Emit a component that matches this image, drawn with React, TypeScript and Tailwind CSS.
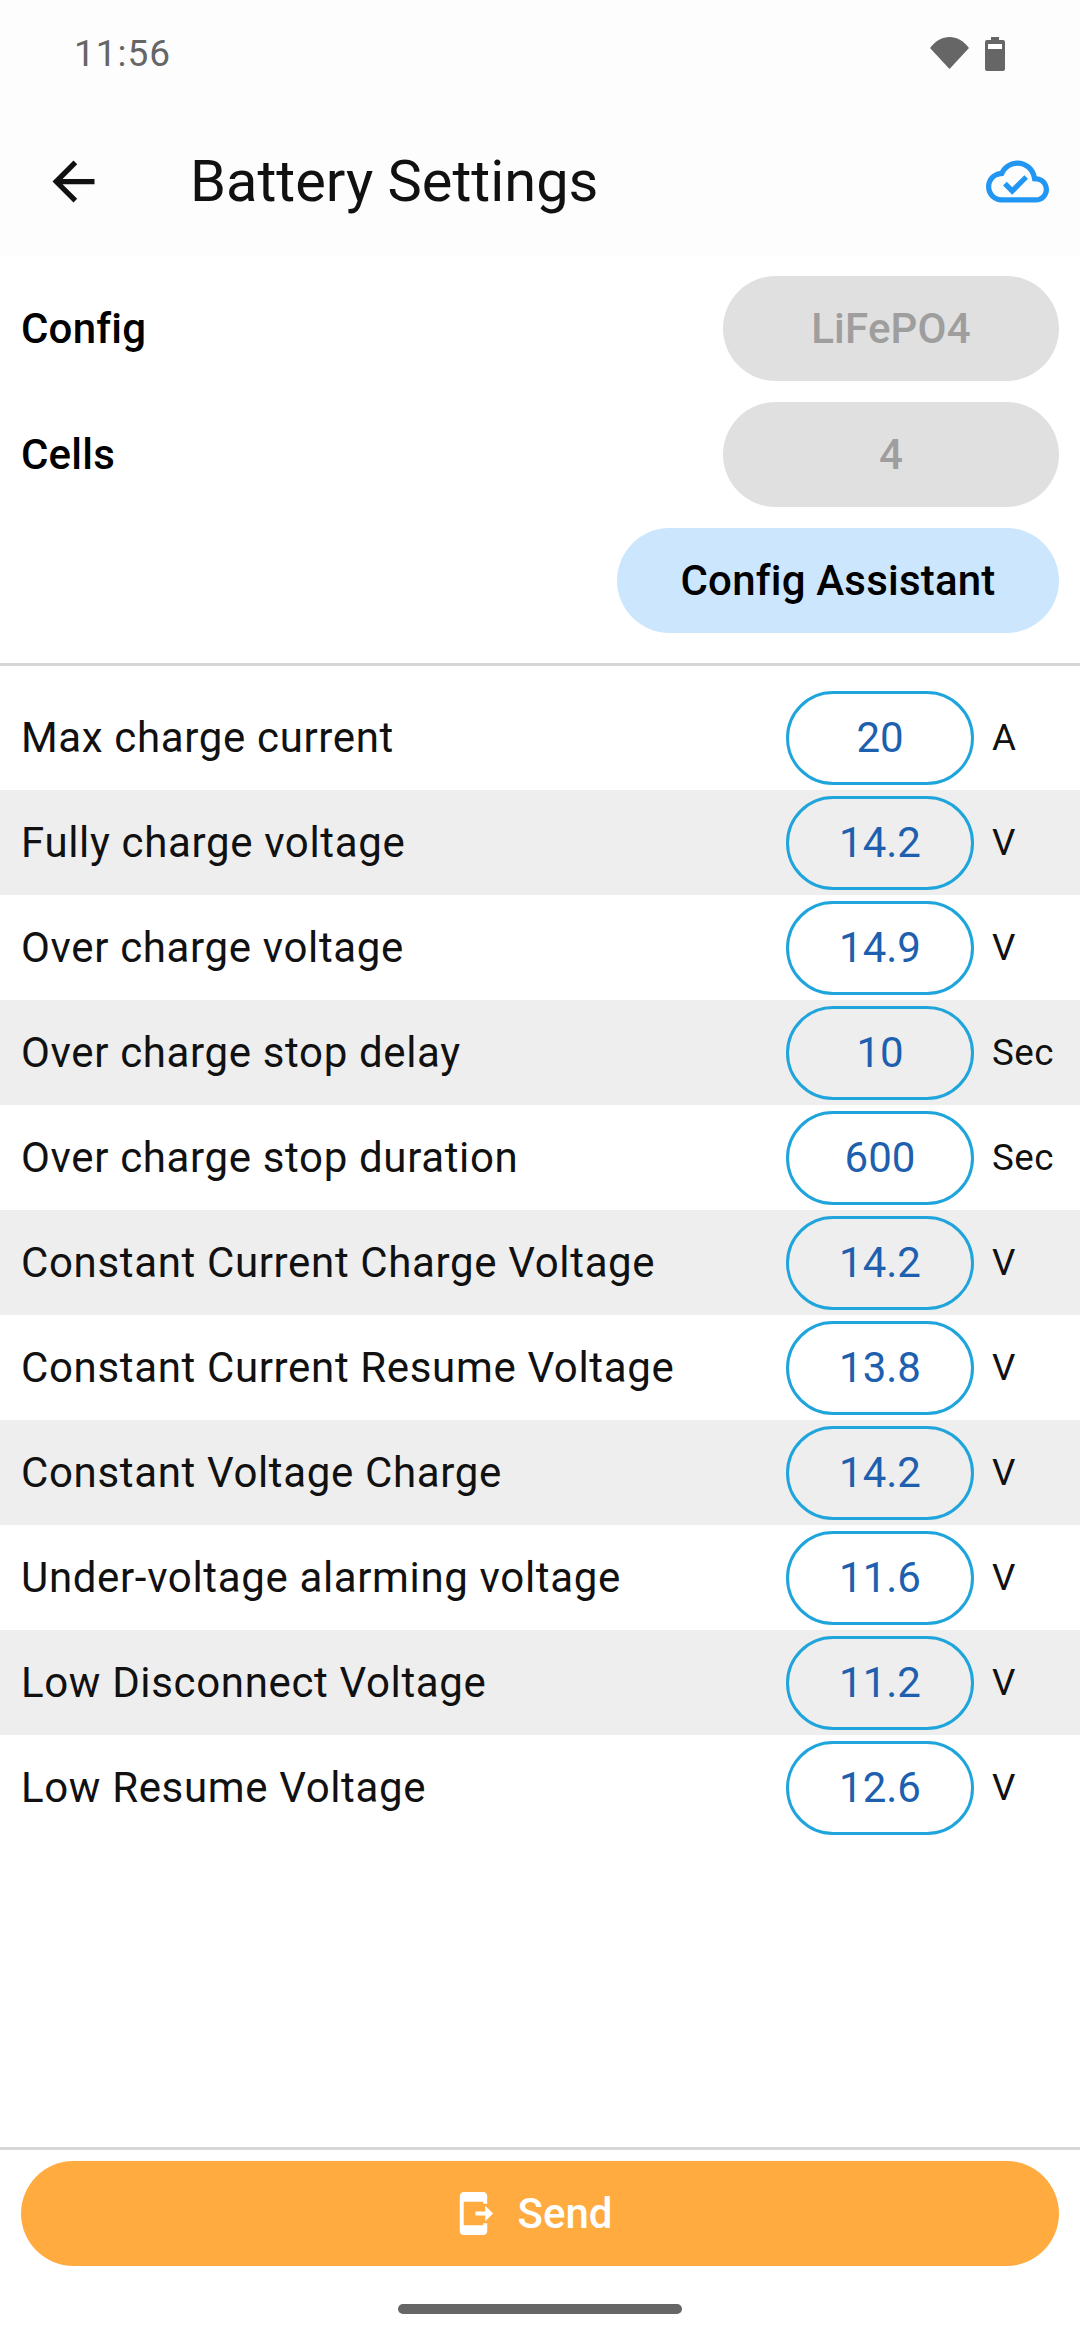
import React from "react";

const rows: [string, string, string][] = [
  ["Max charge current", "20", "A"],
  ["Fully charge voltage", "14.2", "V"],
  ["Over charge voltage", "14.9", "V"],
  ["Over charge stop delay", "10", "Sec"],
  ["Over charge stop duration", "600", "Sec"],
  ["Constant Current Charge Voltage", "14.2", "V"],
  ["Constant Current Resume Voltage", "13.8", "V"],
  ["Constant Voltage Charge", "14.2", "V"],
  ["Under-voltage alarming voltage", "11.6", "V"],
  ["Low Disconnect Voltage", "11.2", "V"],
  ["Low Resume Voltage", "12.6", "V"],
];

export default function App() {
  return (
    <div className="flex h-[2340px] w-[1080px] flex-col bg-white font-['Roboto',sans-serif] text-black">
      <div className="flex h-[108px] items-start justify-between bg-[#fdfdfd] pl-[74px] pr-[75px] pt-[33px]">
        <span className="text-[37px] leading-[42px] tracking-[1px] text-[#666666]">11:56</span>
        <div className="mt-[4px] flex items-start gap-[16px]">
          <svg width="39" height="32" viewBox="0 0 39 32">
            <path d="M0 11 C11 -3.6 28 -3.6 39 11 L19.5 32 Z" fill="#666666" />
          </svg>
          <svg width="20" height="34" viewBox="0 0 20 34">
            <path d="M6 0h8v3h4a2 2 0 0 1 2 2v27a2 2 0 0 1-2 2H2a2 2 0 0 1-2-2V5a2 2 0 0 1 2-2h4z" fill="#666666" />
            <rect x="3" y="7" width="14" height="5" fill="#ffffff" />
          </svg>
        </div>
      </div>
      <div className="flex h-[147px] items-center bg-[#fdfdfd]">
        <svg className="ml-[42px]" width="63" height="63" viewBox="0 0 24 24" fill="#111111">
          <path d="M20 11H7.83l5.59-5.59L12 4l-8 8 8 8 1.41-1.41L7.83 13H20v-2z" />
        </svg>
        <span className="mb-[2px] ml-[85px] text-[57.75px] leading-[66px] text-[#111111]">Battery Settings</span>
        <svg className="ml-auto mr-[31px]" width="63" height="63" viewBox="0 0 24 24" fill="#2196f3">
          <path d="M19.35 10.04C18.67 6.59 15.64 4 12 4 9.11 4 6.6 5.64 5.35 8.04 2.34 8.36 0 10.91 0 14c0 3.31 2.69 6 6 6h13c2.76 0 5-2.24 5-5 0-2.64-2.05-4.78-4.65-4.96zM19 18H6c-2.21 0-4-1.79-4-4 0-2.05 1.53-3.76 3.56-3.97l1.07-.11.5-.95C8.08 7.14 9.94 6 12 6c2.62 0 4.88 1.86 5.39 4.43l.3 1.5 1.53.11c1.56.1 2.78 1.41 2.78 2.96 0 1.65-1.35 3-3 3zm-9-3.82l-2.09-2.09L6.5 13.5 10 17l6.01-6.01-1.41-1.41z" />
        </svg>
      </div>

      <div className="flex flex-col gap-[21px] px-[21px] pt-[21px]">
        <div className="flex items-center justify-between">
          <span className="text-[42px] font-medium tracking-[0.2px]">Config</span>
          <div className="flex h-[105px] w-[336px] items-center justify-center rounded-[53px] bg-[#e0e0e0] text-[42px] font-medium tracking-[0.2px] text-[#9e9e9e]">LiFePO4</div>
        </div>
        <div className="flex items-center justify-between">
          <span className="text-[42px] font-medium tracking-[0.2px]">Cells</span>
          <div className="flex h-[105px] w-[336px] items-center justify-center rounded-[53px] bg-[#e0e0e0] text-[42px] font-medium tracking-[0.2px] text-[#9e9e9e]">4</div>
        </div>
        <div className="flex justify-end">
          <div className="flex h-[105px] w-[442px] items-center justify-center rounded-[53px] bg-[#cce6fd] text-[42px] font-medium tracking-[0.2px]">Config Assistant</div>
        </div>
      </div>

      <div className="mt-[30px] h-[3px] bg-[#d6d6d6]" />

      <div className="mt-[19px] flex flex-col">
        {rows.map(([label, value, unit], i) => (
          <div key={label} className={`flex h-[105px] items-center pl-[21px] ${i % 2 === 1 ? "bg-[#eeeeee]" : "bg-white"}`}>
            <span className="flex-1 text-[42px] tracking-[0.65px] text-[#111111]">{label}</span>
            <div className="flex h-[94px] w-[188px] items-center justify-center rounded-[47px] border-[3px] border-[#1fa5dc] text-[42px] text-[#1e5fae]">{value}</div>
            <span className="ml-[18px] w-[88px] text-[36.75px] tracking-[0.5px] text-[#111111]">{unit}</span>
          </div>
        ))}
      </div>

      <div className="mt-auto h-[3px] bg-[#d6d6d6]" />
      <div className="px-[21px] pt-[11px]">
        <div className="flex h-[105px] items-center justify-center gap-[21px] rounded-[53px] bg-[#ffab40] pr-[18px] text-[42px] font-medium text-white">
          <svg width="47" height="47" viewBox="0 0 24 24" fill="#ffffff">
            <path d="M17 17h2v4c0 1.1-.9 2-2 2H7c-1.1 0-2-.9-2-2V3c0-1.1.9-1.99 2-1.99L17 1c1.1 0 2 .9 2 2v4h-2V6H7v12h10v-1zm5-5-4-4v3h-5v2h5v3l4-4z" />
          </svg>
          <span>Send</span>
        </div>
      </div>
      <div className="flex h-[74px] items-start justify-center pt-[38px]">
        <div className="h-[10px] w-[284px] rounded-[5px] bg-[#666666]" />
      </div>
    </div>
  );
}
